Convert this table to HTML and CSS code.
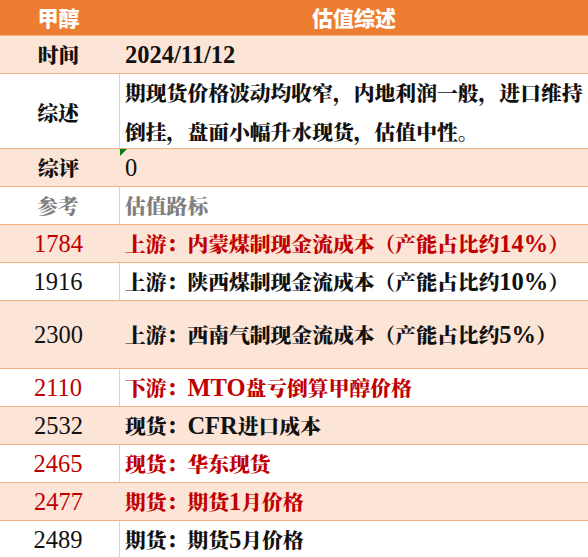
FILE: index.html
```html
<!DOCTYPE html>
<html lang="zh-CN">
<head>
<meta charset="utf-8">
<title>甲醇 估值综述</title>
<link rel="stylesheet" href="styles.css">
</head>
<body>
<div class="sheet">
  <div class="row head">
    <div class="c1">甲醇</div>
    <div class="c2 center">估值综述</div>
  </div>
  <div class="row pink">
    <div class="c1">时间</div>
    <div class="c2"><span class="n b">2024/11/12</span></div>
  </div>
  <div class="row white h75">
    <div class="c1">综述</div>
    <div class="c2 wrap">期现货价格波动均收窄，内地利润一般，进口维持<br>倒挂，盘面小幅升水现货，估值中性。</div>
  </div>
  <div class="row pink">
    <div class="c1">综评</div>
    <div class="c2 marked"><span class="flag"></span><span class="n">0</span></div>
  </div>
  <div class="row white gray">
    <div class="c1">参考</div>
    <div class="c2">估值路标</div>
  </div>
  <div class="row pink red">
    <div class="c1"><span class="n">1784</span></div>
    <div class="c2">上游：内蒙煤制现金流成本（产能占比约<span class="n b">14%</span>）</div>
  </div>
  <div class="row white">
    <div class="c1"><span class="n">1916</span></div>
    <div class="c2">上游：陕西煤制现金流成本（产能占比约<span class="n b">10%</span>）</div>
  </div>
  <div class="row pink h68">
    <div class="c1"><span class="n">2300</span></div>
    <div class="c2">上游：西南气制现金流成本（产能占比约<span class="n b">5%</span>）</div>
  </div>
  <div class="row white red">
    <div class="c1"><span class="n">2110</span></div>
    <div class="c2">下游：<span class="n b">MTO</span>盘亏倒算甲醇价格</div>
  </div>
  <div class="row pink">
    <div class="c1"><span class="n">2532</span></div>
    <div class="c2">现货：<span class="n b">CFR</span>进口成本</div>
  </div>
  <div class="row white red">
    <div class="c1"><span class="n">2465</span></div>
    <div class="c2">现货：华东现货</div>
  </div>
  <div class="row pink red">
    <div class="c1"><span class="n">2477</span></div>
    <div class="c2">期货：期货<span class="n b">1</span>月价格</div>
  </div>
  <div class="row white">
    <div class="c1"><span class="n">2489</span></div>
    <div class="c2">期货：期货<span class="n b">5</span>月价格</div>
  </div>
</div>
</body>
</html>
```

FILE: styles.css
```css
html, body {
  margin: 0;
  padding: 0;
  background: #ffffff;
}

.sheet {
  width: 588px;
  font-family: "Noto Serif CJK SC", "Noto Sans CJK SC", "Liberation Serif", serif;
  font-size: 20.8px;
  font-weight: 900;
  color: #111111;
}

.row {
  display: grid;
  grid-template-columns: 120px 1fr;
  height: 38px;
  box-sizing: border-box;
  border-top: 1px solid #f4b084;
  line-height: 1.2;
}

.row.head {
  height: 35px;
  border-top: none;
  background: #ed7d31;
  color: #ffffff;
  font-family: "Noto Sans CJK SC", sans-serif;
  font-size: 21px;
  font-weight: 900;
}

.row.pink {
  background: #fce4d6;
}

.row.white {
  background: #ffffff;
}

.row.white .c1 {
  border-right: 1px solid #d4d4d4;
}

.row.h75 {
  height: 75px;
}

.row.h68 {
  height: 68px;
}

.row.red {
  color: #c00000;
}

.row.gray {
  color: #7f7f7f;
}

.c1 {
  box-sizing: border-box;
  display: flex;
  align-items: center;
  justify-content: center;
  padding-right: 3px;
}

.c2 {
  display: flex;
  align-items: center;
  padding-left: 5px;
  white-space: nowrap;
}

.c2.center {
  justify-content: center;
  padding-left: 0;
}

.c2.wrap {
  display: block;
  line-height: 39px;
  margin-top: -1px;
}

.c2.marked {
  position: relative;
}

.flag {
  position: absolute;
  left: 0;
  top: 0;
  width: 0;
  height: 0;
  border-top: 7px solid #0b7d0b;
  border-right: 7px solid transparent;
}

.n {
  font-family: "Liberation Serif", serif;
  font-size: 24.5px;
  font-weight: 400;
}

.n.b {
  font-weight: 700;
}
```
